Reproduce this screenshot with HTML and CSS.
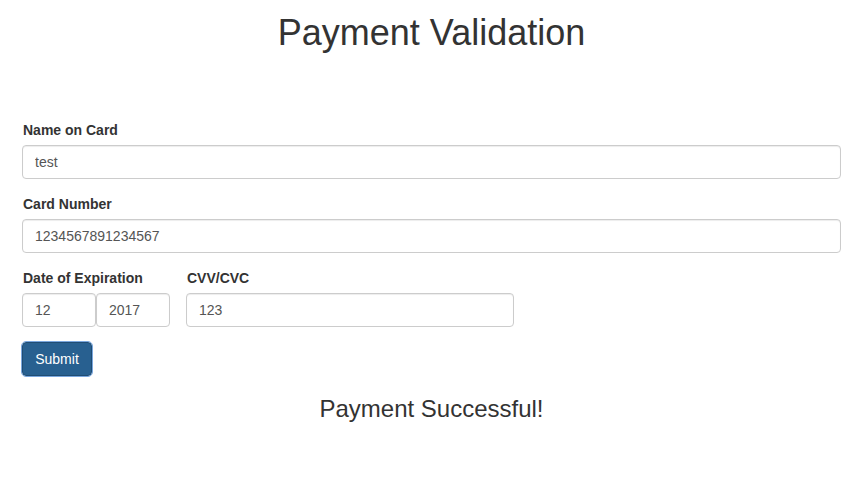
FILE: index.html
```html
<!DOCTYPE html>
<html>
<head>
<meta charset="utf-8">
<link rel="stylesheet" href="styles.css">
</head>
<body>
<div class="page">
  <h1 class="title">Payment Validation</h1>
  <form class="pay-form">
    <div class="form-group">
      <label class="lbl">Name on Card</label>
      <input class="field" type="text" value="test">
    </div>
    <div class="form-group">
      <label class="lbl">Card Number</label>
      <input class="field" type="text" value="1234567891234567">
    </div>
    <div class="form-group row">
      <div class="col-exp">
        <label class="lbl">Date of Expiration</label>
        <div class="exp-inputs">
          <input class="field small" type="text" value="12">
          <input class="field small" type="text" value="2017">
        </div>
      </div>
      <div class="col-cvv">
        <label class="lbl">CVV/CVC</label>
        <input class="field" type="text" value="123">
      </div>
    </div>
    <button class="btn" type="button">Submit</button>
  </form>
  <h3 class="result">Payment Successful!</h3>
</div>
</body>
</html>
```
FILE: styles.css
```css
html, body {
  margin: 0;
  padding: 0;
  background: #fff;
}
body {
  font-family: "Liberation Sans", Arial, sans-serif;
  font-size: 14px;
  line-height: 20px;
  color: #333;
}
.page {
  padding: 13px 16px 0 22px;
}
.title {
  margin: 0;
  font-size: 36px;
  font-weight: 500;
  line-height: 40px;
  text-align: center;
}
.pay-form {
  margin-top: 67px;
}
.form-group {
  margin-bottom: 15px;
}
.lbl {
  display: block;
  font-weight: bold;
  margin-bottom: 5px;
  padding-left: 1px;
}
.field {
  display: block;
  box-sizing: border-box;
  width: 100%;
  height: 34px;
  padding: 6px 12px;
  font-family: "Liberation Sans", Arial, sans-serif;
  font-size: 14px;
  line-height: 20px;
  color: #555;
  background: #fff;
  border: 1px solid #ccc;
  border-radius: 4px;
  box-shadow: inset 0 1px 1px rgba(0,0,0,0.075);
  margin: 0;
}
.row {
  display: flex;
  gap: 16px;
}
.col-exp {
  width: 148px;
}
.exp-inputs {
  display: flex;
}
.field.small {
  width: 74px;
}
.col-cvv {
  width: 328px;
}
.btn {
  display: block;
  box-sizing: border-box;
  width: 70px;
  height: 34px;
  padding: 6px 12px;
  font-family: "Liberation Sans", Arial, sans-serif;
  font-size: 14px;
  line-height: 20px;
  color: #fff;
  background: #286090;
  border: 1px solid #204d74;
  border-radius: 4px;
  outline: 1px solid #7aa7de;
  outline-offset: 0;
  margin: 0;
}
.result {
  margin: 20px 0 0 0;
  font-size: 24px;
  font-weight: 500;
  line-height: 26px;
  text-align: center;
}
```
